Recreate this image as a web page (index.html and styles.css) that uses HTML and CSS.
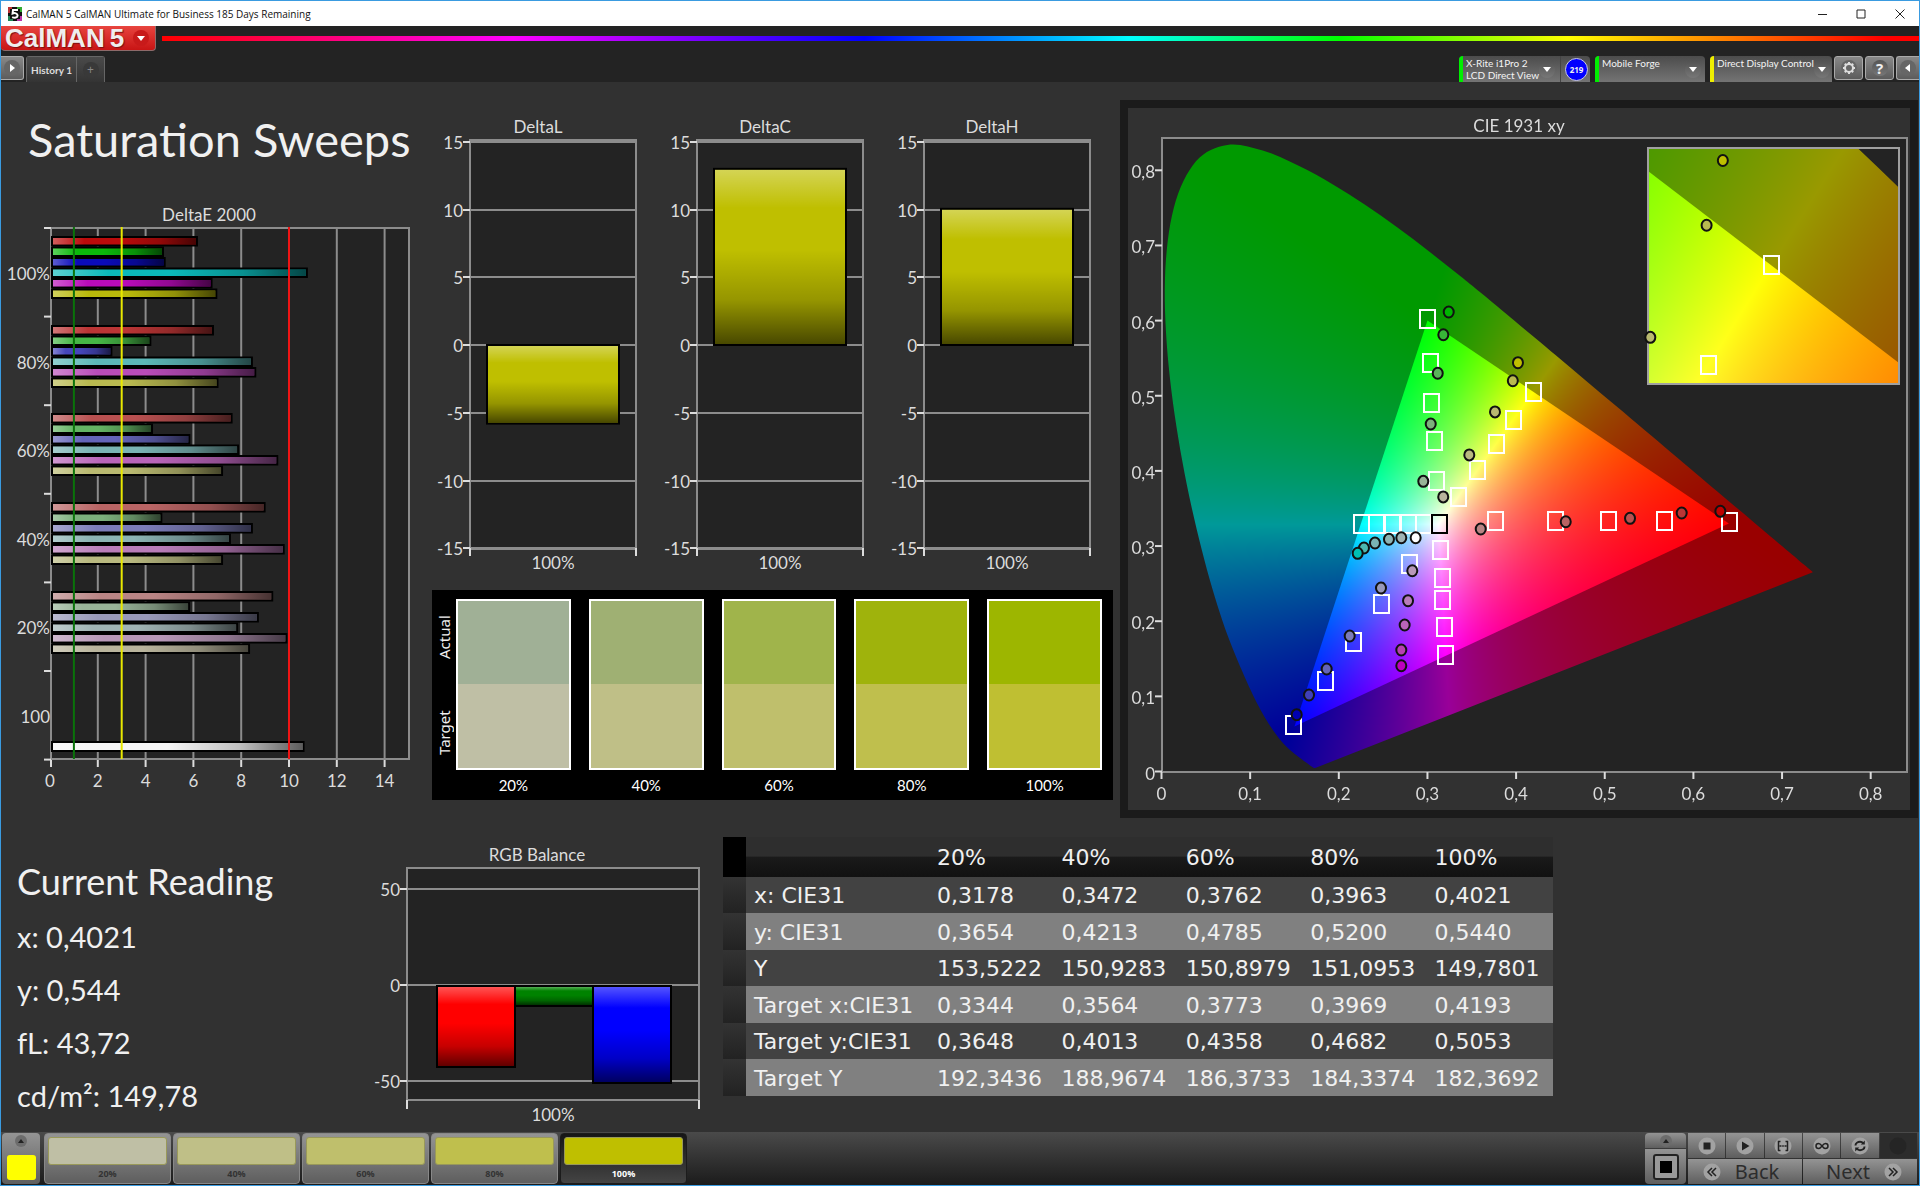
FILE: index.html
```html
<!DOCTYPE html>
<html lang="en">
<head>
<meta charset="utf-8">
<title>CalMAN 5 CalMAN Ultimate for Business 185 Days Remaining</title>
<link rel="stylesheet" href="styles.css">
</head>
<body>
<div class="window">
  <header class="titlebar">
    <svg class="app-icon" viewBox="0 0 14 14" aria-hidden="true">
      <rect width="14" height="14" fill="#111"/>
      <path d="M0 0h4v2H2v4H0z" fill="#b33"/><path d="M14 0v5h-2V2h-3V0z" fill="#3a3"/><path d="M0 14V9h2v3h3v2z" fill="#285"/><path d="M14 14H9v-2h3V9h2z" fill="#b3a"/>
      <path d="M10 3H5L4.600 6.500c2-.8 5-.3 5 2 0 2.300-3 2.700-5.400 1.600" fill="none" stroke="#fff" stroke-width="2"/>
    </svg>
    <span class="titlebar-text">CalMAN 5 CalMAN Ultimate for Business 185 Days Remaining</span>
    <div class="caption-buttons">
      <button type="button" aria-label="Minimize"><svg viewBox="0 0 10 10"><path d="M1 5.500h9"/></svg></button>
      <button type="button" aria-label="Maximize"><svg viewBox="0 0 10 10"><path d="M1 1h8v8H1z"/></svg></button>
      <button type="button" aria-label="Close"><svg viewBox="0 0 10 10"><path d="M.5.5l9 9M9.500.5l-9 9"/></svg></button>
    </div>
  </header>

  <div class="toolbar">
    <div class="brand-row">
      <button type="button" class="brand"><span class="brand-name">CalMAN</span><span class="brand-number">5</span><span class="round round-red"><i class="caret"></i></span></button>
      <div class="spectrum"></div>
    </div>
    <div class="tab-row">
      <button type="button" class="key key-play" aria-label="Show panel"><svg class="key-icon" viewBox="0 0 18 18"><circle cx="9" cy="9" r="8"/><path d="M7 5l5 4-5 4z"/></svg></button>
      <div class="tabs">
        <button type="button" class="tab">History 1</button>
        <button type="button" class="tab tab-add" aria-label="Add history"><span class="round">+</span></button>
      </div>
      <div class="devices">
        <div class="device device-meter">
          <button type="button" class="device-button green"><span class="device-text">X-Rite i1Pro 2<br>LCD Direct View</span><span class="round"><i class="caret"></i></span></button>
          <span class="reading-count">219</span>
        </div>
        <div class="device device-source"><button type="button" class="device-button green"><span class="device-text">Mobile Forge</span><span class="round"><i class="caret"></i></span></button></div>
        <div class="device device-display"><button type="button" class="device-button yellow"><span class="device-text">Direct Display Control</span><span class="round"><i class="caret"></i></span></button></div>
      </div>
      <div class="keys">
        <button type="button" class="key" aria-label="Settings"><svg class="key-icon" viewBox="0 0 18 18"><circle cx="9" cy="9" r="8"/><circle class="line" cx="9" cy="9" r="4"/><path class="teeth" d="M9 3v2M9 13v2M3 9h2M13 9h2M4.800 4.800l1.400 1.400M11.800 11.800l1.400 1.400M4.800 13.200l1.400-1.400M11.800 6.200l1.400-1.400"/></svg></button>
        <button type="button" class="key key-help" aria-label="Help"><span class="round">?</span></button>
        <button type="button" class="key key-last" aria-label="Hide panel"><svg class="key-icon" viewBox="0 0 18 18"><circle cx="9" cy="9" r="8"/><path d="M11 5l-5 4 5 4z"/></svg></button>
      </div>
    </div>
  </div>

  <main class="workspace">
    <div class="upper">
      <section class="sweeps">
        <h1>Saturation Sweeps</h1>
        <svg class="chart" id="delta-e" viewBox="0 0 431 604" role="img" aria-label="DeltaE 2000"></svg>
      </section>
      <section class="deltas">
        <div class="delta-charts">
          <svg class="chart" id="delta-l" viewBox="0 0 227 470" role="img" aria-label="DeltaL"></svg>
          <svg class="chart" id="delta-c" viewBox="0 0 227 470" role="img" aria-label="DeltaC"></svg>
          <svg class="chart" id="delta-h" viewBox="0 0 227 470" role="img" aria-label="DeltaH"></svg>
        </div>
        <div class="compare">
          <div class="compare-legend"><span>Actual</span><span>Target</span></div>
          <figure class="pair pair-20"><div></div><figcaption>20%</figcaption></figure>
          <figure class="pair pair-40"><div></div><figcaption>40%</figcaption></figure>
          <figure class="pair pair-60"><div></div><figcaption>60%</figcaption></figure>
          <figure class="pair pair-80"><div></div><figcaption>80%</figcaption></figure>
          <figure class="pair pair-100"><div></div><figcaption>100%</figcaption></figure>
        </div>
      </section>
      <section class="cie">
        <canvas id="cie-fill" width="782" height="702"></canvas>
        <svg class="chart" id="cie-marks" viewBox="0 0 782 702" role="img" aria-label="CIE 1931 xy"></svg>
      </section>
    </div>

    <div class="lower">
      <section class="reading">
        <h2>Current Reading</h2>
        <p>x: 0,4021</p>
        <p>y: 0,544</p>
        <p>fL: 43,72</p>
        <p>cd/m²: 149,78</p>
      </section>
      <section class="balance">
        <svg class="chart" id="rgb-balance" viewBox="0 0 358 288" role="img" aria-label="RGB Balance"></svg>
      </section>
      <table class="results">
        <thead>
          <tr><td class="marker"></td><th></th><th>20%</th><th>40%</th><th>60%</th><th>80%</th><th>100%</th></tr>
        </thead>
        <tbody>
          <tr><td class="marker"></td><th>x: CIE31</th><td>0,3178</td><td>0,3472</td><td>0,3762</td><td>0,3963</td><td>0,4021</td></tr>
          <tr><td class="marker"></td><th>y: CIE31</th><td>0,3654</td><td>0,4213</td><td>0,4785</td><td>0,5200</td><td>0,5440</td></tr>
          <tr><td class="marker"></td><th>Y</th><td>153,5222</td><td>150,9283</td><td>150,8979</td><td>151,0953</td><td>149,7801</td></tr>
          <tr><td class="marker"></td><th>Target x:CIE31</th><td>0,3344</td><td>0,3564</td><td>0,3773</td><td>0,3969</td><td>0,4193</td></tr>
          <tr><td class="marker"></td><th>Target y:CIE31</th><td>0,3648</td><td>0,4013</td><td>0,4358</td><td>0,4682</td><td>0,5053</td></tr>
          <tr><td class="marker"></td><th>Target Y</th><td>192,3436</td><td>188,9674</td><td>186,3733</td><td>184,3374</td><td>182,3692</td></tr>
        </tbody>
      </table>
    </div>
  </main>

  <footer class="transport">
    <button type="button" class="pattern-menu" aria-label="Pattern colour"><span class="dot"><i class="caret-up"></i></span><span class="pattern-colour"></span></button>
    <div class="steps">
      <button type="button" class="step step-20"><i></i>20%</button>
      <button type="button" class="step step-40"><i></i>40%</button>
      <button type="button" class="step step-60"><i></i>60%</button>
      <button type="button" class="step step-80"><i></i>80%</button>
      <button type="button" class="step step-100 current"><i></i>100%</button>
    </div>
    <div class="window-pattern">
      <button type="button" class="pattern-up" aria-label="Pattern size"><span class="dot"><i class="caret-up"></i></span></button>
      <button type="button" class="pattern-size" aria-label="Window pattern"><span></span></button>
    </div>
    <div class="controls">
      <div class="media">
        <button type="button" aria-label="Stop"><svg viewBox="0 0 18 18"><circle cx="9" cy="9" r="8.500"/><path d="M5.500 5.500h7v7h-7z"/></svg></button>
        <button type="button" aria-label="Play"><svg viewBox="0 0 18 18"><circle cx="9" cy="9" r="8.500"/><path d="M6 4.500l7.500 4.500L6 13.500z"/></svg></button>
        <button type="button" aria-label="Read series"><svg viewBox="0 0 18 18"><circle cx="9" cy="9" r="8.500"/><path class="line heavy" d="M6.500 4.500h-2v9h2M11.500 4.500h2v9h-2M5.500 9h2M8.200 9h1.600M10.500 9h2"/></svg></button>
        <button type="button" aria-label="Read continuously"><svg viewBox="0 0 18 18"><circle cx="9" cy="9" r="8.500"/><path class="line heavy" d="M9 9C7.500 7 6.500 6.500 5.500 6.500a2.500 2.500 0 0 0 0 5C6.500 11.500 7.500 11 9 9s2.500-2.500 3.500-2.500a2.500 2.500 0 0 1 0 5C11.500 11.500 10.500 11 9 9z"/></svg></button>
        <button type="button" aria-label="Refresh"><svg viewBox="0 0 18 18"><circle cx="9" cy="9" r="8.500"/><path class="line thick" d="M4.500 8.500C4.500 6 7 4.800 9 4.800c1.500 0 2.500.6 3.300 1.700M13.500 9.500c0 2.500-2.500 3.700-4.500 3.700-1.500 0-2.500-.6-3.300-1.700"/><path d="M13.800 3.500v4h-4zM4.200 14.500v-4h4z"/></svg></button>
        <span class="media-blank"><svg viewBox="0 0 18 18"><circle cx="9" cy="9" r="8.500"/></svg></span>
      </div>
      <div class="paging">
        <button type="button"><svg viewBox="0 0 18 18"><circle cx="9" cy="9" r="8.500"/><path class="line heavy" d="M9 5L5 9l4 4M13 5L9 9l4 4"/></svg>Back</button>
        <button type="button">Next<svg viewBox="0 0 18 18"><circle cx="9" cy="9" r="8.500"/><path class="line heavy" d="M5 5l4 4-4 4M9 5l4 4-4 4"/></svg></button>
      </div>
    </div>
  </footer>
</div>
<script src="charts.js"></script>
</body>
</html>
```
FILE: styles.css
```css
* { box-sizing: border-box; }

body {
  margin: 0;
  background: #313131;
  color: #f0f0f0;
  font-family: Lato, "Noto Sans", sans-serif;
  font-size: 11px;
}

button {
  margin: 0;
  padding: 0;
  border: 0;
  color: inherit;
  font: inherit;
  cursor: pointer;
}

.window {
  display: flex;
  flex-direction: column;
  min-height: 100vh;
  border: 1px solid #3a9be0;
}

/* Title bar */
.titlebar {
  display: flex;
  align-items: center;
  height: 25px;
  padding-left: 7px;
  background: #fff;
  color: #111;
}
.app-icon { width: 14px; height: 14px; margin-right: 4px; }
.titlebar-text { font-family: "Open Sans", "Noto Sans", sans-serif; font-size: 10px; }
.caption-buttons { display: flex; margin-left: auto; }
.caption-buttons button { width: 39px; height: 24px; background: none; }
.caption-buttons svg { display: block; width: 10px; height: 10px; margin: 0 auto; fill: none; stroke: #222; overflow: visible; }

/* Toolbar */
.toolbar { background: #232323; }
.brand-row { display: flex; align-items: center; gap: 6px; height: 28px; }
.brand {
  display: flex;
  align-items: center;
  align-self: flex-start;
  width: 155px;
  height: 25px;
  padding-left: 4px;
  border: 1px solid #8d6a6a;
  border-width: 0 1px 1px 0;
  border-radius: 0 0 4px 4px;
  background: linear-gradient(#e8453f, #c81414);
  color: #eee;
  font: bold 26px "Liberation Sans", sans-serif;
  line-height: 22px;
  text-shadow: 1px 1px 1px #7a1010;
}
.brand-number { margin-left: 5px; }
.round {
  display: inline-flex;
  align-items: center;
  justify-content: center;
  flex: none;
  width: 16px;
  height: 16px;
  border-radius: 50%;
  background: linear-gradient(#555, #777);
}
.round-red { margin-left: auto; margin-right: 6px; background: #c81a1a; }
.caret { border: 4px solid transparent; border-top: 5px solid #fff; border-bottom: 0; }
.caret-up { border: 3px solid transparent; border-bottom: 4px solid #222; border-top: 0; }
.spectrum {
  flex: 1;
  height: 5px;
  margin-bottom: 3px;
  background: linear-gradient(90deg, #f00, #f0f 20%, #00f 40%, #0ff 55%, #0f0 67%, #ff0 80%, #f00 98%);
}

.tab-row { display: flex; align-items: flex-end; height: 28px; }
.key {
  display: flex;
  align-items: center;
  justify-content: center;
  width: 29px;
  height: 24px;
  margin-bottom: 2px;
  border: 1px solid #aaa;
  border-radius: 3px;
  background: linear-gradient(#888, #5c5c5c);
}
.key-play { width: 23px; border-left: 0; border-radius: 0 3px 3px 0; }
.key-last { width: 23px; border-right: 0; border-radius: 3px 0 0 3px; }
.key-help { font: bold 15px "Noto Sans", sans-serif; }
.key-icon { width: 18px; height: 18px; fill: #fff; }
.key-icon circle { fill: #666; }
.key-icon .line { fill: none; stroke: #ddd; stroke-width: 2; }
.key-icon .teeth { stroke: #ddd; stroke-width: 2; }
.tabs { display: flex; margin-left: 2px; border: 1px solid #666; border-bottom: 0; border-radius: 3px 3px 0 0; }
.tab { width: 49px; height: 25px; background: linear-gradient(#4a4a4a, #343434); color: #ddd; font-size: 10px; font-weight: 700; white-space: nowrap; }
.tab-add { width: 28px; border-left: 1px solid #666; }
.tab-add .round { background: #393939; color: #888; font: 12px "Noto Sans", sans-serif; }

.devices { display: flex; gap: 5px; margin-left: auto; }
.device { display: flex; align-items: center; height: 26px; border-radius: 4px 4px 0 0; background: linear-gradient(#4c4c4c, #747474); overflow: hidden; }
.device-meter { width: 131px; }
.device-source { width: 110px; }
.device-display { width: 122px; }
.device-button {
  display: flex;
  flex: 1;
  align-items: center;
  justify-content: space-between;
  min-width: 0;
  height: 26px;
  padding: 0 4px 0 3px;
  border-left: 4px solid #0e0;
  background: none;
  color: #f4f4f4;
  font-size: 10px;
  line-height: 12px;
  text-align: left;
}
.device-button.yellow { border-left-color: #ee0; }
.device-text { align-self: flex-start; padding-top: 1px; white-space: nowrap; }
.device-meter .device-button { padding-right: 8px; border-right: 1px solid #444; }
.reading-count {
  flex: none;
  width: 23px;
  height: 23px;
  margin: 0 2px 0 4px;
  border: 1px solid #ccd;
  border-radius: 50%;
  background: #00f;
  font: bold 8px "Noto Sans", sans-serif;
  line-height: 21px;
  text-align: center;
}
.device .round { margin-top: 1px; }
.keys { display: flex; gap: 2px; margin-left: 2px; }

/* Workspace */
.workspace { flex: 1; }
.chart { display: block; width: 100%; height: auto; }
.upper { display: grid; grid-template-columns: minmax(0, 431fr) minmax(0, 681fr) minmax(0, 806fr); align-items: start; }
h1, h2, p, figure { margin: 0; font-weight: 400; }
h1 { margin: 25px 0 25px 27px; font-size: 47px; line-height: 64px; white-space: nowrap; }
.delta-charts { display: grid; grid-template-columns: repeat(3, 1fr); margin: 28px 0 10px; }

.compare { display: grid; grid-template-columns: 2px repeat(5, 1fr); column-gap: 18px; height: 210px; padding: 0 11px 0 4px; background: #000; }
.compare-legend { display: grid; grid-template-rows: 1fr 1fr; width: 16px; height: 190px; }
.compare-legend span { writing-mode: vertical-rl; transform: rotate(180deg); text-align: center; font: 15px "Noto Sans", sans-serif; line-height: 16px; }
.pair { padding-top: 9px; }
.pair div { height: 171px; border: 2px solid #fff; background: linear-gradient(var(--actual) 50%, var(--target) 50%); }
.pair figcaption { padding-top: 4px; font-size: 15px; line-height: 22px; text-align: center; color: #fff; }
.pair-20 { --actual: #a0b096; --target: #bfbfa5; }
.pair-40 { --actual: #9fb073; --target: #bfbf87; }
.pair-60 { --actual: #a0b44b; --target: #bfbf6c; }
.pair-80 { --actual: #9fb30c; --target: #bfbf4d; }
.pair-100 { --actual: #9db600; --target: #bfbf32; }

.cie { display: grid; margin: 18px 1px 0 7px; border: 8px solid #1b1b1b; }
.cie > * { grid-area: 1 / 1; }
#cie-fill { display: block; width: 100%; height: auto; }

.lower { display: grid; grid-template-columns: minmax(0, 364fr) minmax(0, 358fr) minmax(0, 830fr) minmax(0, 366fr); align-items: start; }
.reading { padding: 34px 0 0 16px; white-space: nowrap; }
.reading h2 { font-size: 36px; line-height: 58px; }
.reading p { font-size: 29px; line-height: 53px; }
.balance { padding-top: 23px; }

.results { width: 100%; margin-top: 19px; border-collapse: collapse; table-layout: fixed; font: 22px "DejaVu Sans", sans-serif; line-height: 26px; }
.results th, .results td { height: 36px; padding: 2px 0 0 6px; font-weight: 400; text-align: left; white-space: nowrap; }
.results th:nth-child(2) { width: 185px; padding-left: 8px; }
.results .marker { width: 23px; background: linear-gradient(#333, #222); }
.results thead th { height: 40px; background: linear-gradient(#2e2e2e 48%, #1a1a1a 50%, #111); }
.results thead .marker { background: #000; }
.results tbody tr { background: #424242; }
.results tbody tr:nth-child(even) { background: #808080; }
.results tbody tr:nth-child(even) td, .results tbody tr:nth-child(even) th { height: 37px; }

/* Charts */
.chart text { fill: #dcdcdc; font-size: 17px; }
.chart .plot { fill: #232323; stroke: #8c8c8c; stroke-width: 2; }
.chart .plot.open { fill: none; }
.chart .grid { stroke: #8c8c8c; stroke-width: 2; }
.chart .tick { stroke: #dcdcdc; stroke-width: 2; }
.chart .bar { stroke: #000; stroke-width: 2; }
.chart .limit { stroke-width: 2; }
.chart .target { fill: none; stroke: #fff; stroke-width: 2; }
.chart .white-point { stroke: #000; }
.chart .actual { stroke: #111; stroke-width: 2; }
.chart .inset { fill: none; stroke: #a0a0a0; stroke-width: 2; }

/* Transport bar */
.transport { display: flex; height: 53px; padding: 1px 2px 1px 1px; background: linear-gradient(#4a4a4a, #1b1b1b); }
.pattern-menu, .step, .pattern-up, .pattern-size, .media button, .paging button {
  background: linear-gradient(#949494, #5e5e5e);
}
.pattern-menu { display: flex; flex-direction: column; align-items: center; gap: 8px; width: 38px; padding-top: 2px; border-radius: 4px; }
.dot { display: flex; align-items: center; justify-content: center; width: 12px; height: 12px; border-radius: 50%; background: #6c6c6c; }
.pattern-colour { width: 29px; height: 25px; border-radius: 3px; background: #ff0; }
.steps { display: flex; gap: 2px; margin-left: 4px; }
.step {
  display: flex;
  flex-direction: column;
  align-items: center;
  width: 127px;
  padding: 3px 3px 0;
  border: 1px solid #888;
  border-radius: 4px;
  color: #333;
  font: bold 9px "Open Sans", sans-serif;
  line-height: 18px;
}
.step i { width: 100%; height: 32px; border: 1px solid #99995a; border-radius: 3px; background: var(--swatch); }
.step-20 { --swatch: #bfbfa5; }
.step-40 { --swatch: #bfbf87; }
.step-60 { --swatch: #bfbf6c; }
.step-80 { --swatch: #bfbf4d; }
.step-100 { --swatch: #bfbf00; }
.step.current { border-color: #1c1c1c; background: linear-gradient(#161616, #444); color: #fff; }
.window-pattern { display: flex; flex-direction: column; gap: 1px; width: 41px; margin-left: auto; }
.pattern-up { display: flex; align-items: center; justify-content: center; height: 15px; border-radius: 4px 4px 0 0; }
.pattern-size { display: flex; align-items: center; justify-content: center; flex: 1; border-radius: 0 0 4px 4px; }
.pattern-size span { width: 26px; height: 26px; border: 7px solid #999; outline: 2px solid #222; outline-offset: -2px; border-radius: 3px; background: #000; }
.controls { display: flex; flex-direction: column; gap: 1px; width: 229px; margin-left: 2px; }
.controls svg { display: block; width: 18px; height: 18px; fill: #222; }
.controls circle { fill: #a2a2a2; }
.controls .line { fill: none; stroke: #222; stroke-width: 1; }
.controls .heavy { stroke-width: 1.5; }
.controls .thick { stroke-width: 2; }
.media { display: grid; grid-template-columns: repeat(6, 1fr); gap: 1px; height: 25px; }
.media > * { display: flex; align-items: center; justify-content: center; }
.media-blank { background: #2c2c2c; }
.media-blank circle { fill: #252525; }
.paging { display: grid; grid-template-columns: 1fr 1fr; gap: 1px; flex: 1; }
.paging button { display: flex; align-items: center; justify-content: center; gap: 14px; color: #2c2c2c; font: 20px "Noto Sans", sans-serif; line-height: 24px; }
.paging button:first-child { padding-right: 8px; }
.paging button:last-child { padding-left: 8px; }
```
FILE: charts.js
```js
const SVG = 'http://www.w3.org/2000/svg';

function add(parent, name, attrs, text) {
  const el = document.createElementNS(SVG, name);
  for (const key in attrs) el.setAttribute(key, attrs[key]);
  if (text !== undefined) el.textContent = text;
  parent.appendChild(el);
  return el;
}

function line(svg, cls, x1, y1, x2, y2) {
  return add(svg, 'line', { class: cls, x1, y1, x2, y2 });
}

function label(svg, x, y, anchor, text) {
  return add(svg, 'text', { x, y, 'text-anchor': anchor }, text);
}

// Light-to-dark shading laid over every bar.
function shading(svg, id, vertical) {
  const g = add(svg, 'linearGradient', { id, x1: 0, y1: 0, x2: vertical ? 0 : 1, y2: vertical ? 1 : 0 });
  const stops = [[0, '#fff', 0.33], [0.22, '#fff', 0], [0.46, '#000', 0], [0.75, '#000', 0.22], [1, '#000', 0.62]];
  for (const [offset, color, opacity] of stops) {
    add(g, 'stop', { offset, 'stop-color': color, 'stop-opacity': opacity });
  }
}

function bar(svg, x, y, width, height, fill, shade) {
  add(svg, 'rect', { class: 'bar', x, y, width, height, fill });
  add(svg, 'rect', { x: x + 1, y: y + 1, width: width - 2, height: height - 2, fill: `url(#${shade})` });
}

/* DeltaE 2000, grouped horizontal bars */
(function () {
  const svg = document.getElementById('delta-e');
  const left = 50, right = 408, top = 32, bottom = 563, unit = 23.9, pitch = 88.6;
  const x = v => left - 1 + v * unit;
  const groups = [
    ['100%', 45, [6.19, 4.77, 4.84, 10.79, 6.8, 7.0], ['#bb0b0b', '#0bb90b', '#0b0bb9', '#0bb9b9', '#b90bb9', '#b9b90b']],
    ['80%', 134, [6.86, 4.24, 2.61, 8.49, 8.63, 7.05], ['#bb3535', '#46b646', '#4646bb', '#5cb8b8', '#b94cb9', '#b9b950']],
    ['60%', 222, [7.64, 4.31, 5.87, 7.91, 9.55, 7.24], ['#b95050', '#64b464', '#6464b9', '#7ab4b4', '#b964b9', '#b9b970']],
    ['40%', 311, [9.02, 4.7, 8.49, 7.57, 9.82, 7.24], ['#b96464', '#7cb07c', '#7c7cb9', '#8cb4b4', '#b97cb9', '#b9b980']],
    ['20%', 400, [9.34, 5.86, 8.74, 7.87, 9.93, 8.37], ['#b98484', '#98b498', '#9898b9', '#a0b4b4', '#b898b8', '#b9b49c']]
  ];
  shading(svg, 'shade-h', false);
  label(svg, 208, 25, 'middle', 'DeltaE 2000');
  add(svg, 'rect', { class: 'plot', x: left, y: top, width: right - left, height: bottom - top });
  for (let v = 0; v <= 14; v += 2) {
    if (v) line(svg, 'grid', x(v), top, x(v), bottom);
    line(svg, 'tick', v ? x(v) : left, bottom + 1, v ? x(v) : left, bottom + 8);
    label(svg, x(v), 591, 'middle', v);
  }
  for (let i = 0; i <= 6; i++) line(svg, 'tick', 43, top + i * pitch, left, top + i * pitch);
  groups.forEach(([name, first, values, colors], i) => {
    label(svg, 49, 84 + i * pitch, 'end', name);
    values.forEach((v, k) => bar(svg, left + 1, first - 4 + k * 10.5, x(v) - left - 2, 8.5, colors[k], 'shade-h'));
  });
  label(svg, 49, 527, 'end', '100');
  bar(svg, left + 1, 546, x(10.65) - left - 2, 9, '#f4f4f4', 'shade-h');
  for (const [v, color] of [[1, '#0a730a'], [3, '#e8e800'], [10, '#f01414']]) {
    line(svg, 'limit', x(v), top - 1, x(v), bottom).setAttribute('stroke', color);
  }
})();

/* DeltaL, DeltaC, DeltaH */
function deltaChart(id, title, value) {
  const svg = document.getElementById(id);
  const left = 38, right = 204, zero = 235, unit = 13.55;
  shading(svg, id + '-shade', true);
  label(svg, 106, 23, 'middle', title);
  add(svg, 'rect', { class: 'plot', x: left, y: 30, width: right - left, height: 409 });
  for (let v = -15; v <= 15; v += 5) {
    const y = Math.round(zero - v * unit);
    line(svg, 'grid', left, y, right, y);
    line(svg, 'tick', left - 7, y, left, y);
    label(svg, left - 7, y + 7, 'end', v);
  }
  line(svg, 'tick', left, 438, left, 446);
  line(svg, 'tick', right, 438, right, 446);
  const height = Math.abs(value) * unit;
  bar(svg, 55, value > 0 ? zero - height : zero, 132, height, '#bfbf00', id + '-shade');
  label(svg, 121, 459, 'middle', '100%');
}
deltaChart('delta-l', 'DeltaL', -5.8);
deltaChart('delta-c', 'DeltaC', 13);
deltaChart('delta-h', 'DeltaH', 10.05);

/* RGB Balance */
(function () {
  const svg = document.getElementById('rgb-balance');
  const left = 42, right = 334, top = 27, bottom = 259, zero = 144;
  shading(svg, 'rgb-shade', true);
  label(svg, 172, 20, 'middle', 'RGB Balance');
  add(svg, 'rect', { class: 'plot', x: left, y: top, width: right - left, height: bottom - top });
  for (const v of [50, 0, -50]) {
    const y = zero - v * 1.92;
    line(svg, 'grid', left, y, right, y);
    line(svg, 'tick', left - 7, y, left, y);
    label(svg, left - 7, y + 7, 'end', v);
  }
  line(svg, 'tick', left, bottom, left, bottom + 9);
  line(svg, 'tick', right, bottom, right, bottom + 9);
  [['#f00', 81], ['#008200', 20], ['#00f', 97]].forEach(([color, h], i) => {
    bar(svg, 72 + i * 78, zero + 1, 78, h, color, 'rgb-shade');
  });
  label(svg, 188, 280, 'middle', '100%');
})();

/* CIE 1931 xy */
const LOCUS = [
  [.1741, .005], [.1733, .0048], [.1714, .0051], [.1689, .0069], [.1644, .0109], [.1566, .0177], [.144, .0297],
  [.1355, .0399], [.1241, .0578], [.1096, .0868], [.0913, .1327], [.0687, .2007], [.0454, .295], [.0235, .4127],
  [.0082, .5384], [.0039, .6548], [.0139, .7502], [.0389, .812], [.0743, .8338], [.1142, .8262], [.1547, .8059],
  [.1929, .7816], [.2296, .7543], [.2658, .7243], [.3016, .6923], [.3373, .6589], [.3731, .6245], [.4441, .5547],
  [.5125, .4866], [.5752, .4242], [.627, .3725], [.6658, .334], [.6915, .3083], [.7079, .292], [.719, .2809],
  [.726, .274], [.7347, .2653]
];
const GAMUT = [[.64, .33], [.3, .6], [.15, .06]];
const SERIES = [
  { targets: [[.3765, .333], [.4439, .333], [.5034, .333], [.5673, .333], [.64, .332]],
    actual: [[.3601, .3227, '#b98484'], [.456, .3324, '#b96464'], [.5285, .3369, '#b95050'], [.5868, .344, '#bb3535'], [.6304, .3462, '#bf0000']] },
  { targets: [[.3097, .3861], [.3077, .4394], [.3043, .4903], [.3025, .544], [.299, .602]],
    actual: [[.2953, .3861, '#98b498'], [.3037, .4624, '#7cb07c'], [.3116, .5299, '#5ab45a'], [.3179, .5812, '#38b638'], [.324, .6115, '#00b400']] },
  { targets: [[.2795, .2765], [.248, .2225], [.216, .172], [.184, .1204], [.1487, .0623]],
    actual: [[.2476, .2442, '#9898b9'], [.2123, .1803, '#7c7cb9'], [.1863, .1364, '#6464b9'], [.1664, .1018, '#4040b9'], [.1525, .0756, '#0000b0']] },
  { targets: [[.2946, .33], [.2777, .33], [.26, .33], [.2423, .33], [.2247, .33]],
    actual: [[.2705, .3111, '#a0b4b4'], [.2566, .309, '#8cb4b4'], [.2408, .3041, '#7ab4b4'], [.2284, .2974, '#4cb8b0'], [.2213, .2903, '#00bfb4']] },
  { targets: [[.3145, .2952], [.3168, .2575], [.3168, .2278], [.3183, .1923], [.3201, .1554]],
    actual: [[.2829, .2672, '#b898b8'], [.2781, .2273, '#b97cb9'], [.2743, .195, '#b964b9'], [.2705, .1617, '#b940b0'], [.2705, .1408, '#bf00bf']] },
  { targets: [[.3344, .3648], [.3564, .4013], [.3773, .4358], [.3969, .4682], [.4193, .5053]],
    actual: [[.3178, .3654, '#b9b49c'], [.3472, .4213, '#b9b980'], [.3762, .4785, '#b9b970'], [.3963, .52, '#b9b950'], [.4021, .544, '#bfbf00']] }
];
const mainView = { x: 34, y: 30, w: 745, h: 633, px: v => 33.5 + v * 886.5, py: v => 663.5 - v * 751.5, ux: p => (p - 33.5) / 886.5, uy: p => (663.5 - p) / 751.5 };
const insetView = { x: 520, y: 40, w: 251, h: 236, px: v => 643 + (v - .4193) * 2800, py: v => 157 - (v - .5053) * 2700, ux: p => .4193 + (p - 643) / 2800, uy: p => .5053 - (p - 157) / 2700 };

// Linear RGB of a chromaticity, scaled so that its largest channel is 1.
function rgbOf(x, y) {
  if (y < 1e-4) y = 1e-4;
  const X = x / y, Z = (1 - x - y) / y;
  const r = Math.max(0, 3.2406 * X - 1.5372 - .4986 * Z);
  const g = Math.max(0, -.9689 * X + 1.8758 + .0415 * Z);
  const b = Math.max(0, .0557 * X - .204 + 1.057 * Z);
  const m = Math.max(r, g, b) || 1;
  return [r / m, g / m, b / m];
}

function layer(view, gain) {
  const c = document.createElement('canvas');
  c.width = view.w;
  c.height = view.h;
  const ctx = c.getContext('2d');
  const img = ctx.createImageData(view.w, view.h);
  for (let j = 0, o = 0; j < view.h; j++) {
    for (let i = 0; i < view.w; i++, o += 4) {
      const rgb = rgbOf(view.ux(view.x + i + .5), view.uy(view.y + j + .5));
      for (let k = 0; k < 3; k++) img.data[o + k] = rgb[k] * 255 * gain;
      img.data[o + 3] = 255;
    }
  }
  ctx.putImageData(img, 0, 0);
  return c;
}

function paint(ctx, view) {
  ctx.save();
  ctx.beginPath();
  ctx.rect(view.x, view.y, view.w, view.h);
  ctx.clip();
  ctx.fillStyle = '#232323';
  ctx.fillRect(view.x, view.y, view.w, view.h);

  const pts = LOCUS.map(([x, y]) => [view.px(x), view.py(y)]);
  ctx.beginPath();
  ctx.moveTo(...pts[0]);
  for (let i = 0; i < pts.length - 1; i++) {
    const a = pts[Math.max(0, i - 1)], b = pts[i], c = pts[i + 1], d = pts[Math.min(pts.length - 1, i + 2)];
    ctx.bezierCurveTo(b[0] + (c[0] - a[0]) / 6, b[1] + (c[1] - a[1]) / 6, c[0] - (d[0] - b[0]) / 6, c[1] - (d[1] - b[1]) / 6, c[0], c[1]);
  }
  ctx.closePath();
  ctx.clip();
  ctx.drawImage(layer(view, .6), view.x, view.y);

  ctx.beginPath();
  GAMUT.forEach(([x, y]) => ctx.lineTo(view.px(x), view.py(y)));
  ctx.closePath();
  ctx.clip();
  ctx.drawImage(layer(view, 1), view.x, view.y);
  ctx.restore();
}

function target(svg, view, [x, y], cls = 'target') {
  add(svg, 'rect', { class: cls, x: Math.round(view.px(x)) - 7, y: Math.round(view.py(y)) - 9, width: 15, height: 18 });
}

function actual(svg, view, [x, y, fill]) {
  add(svg, 'ellipse', { class: 'actual', cx: view.px(x), cy: view.py(y), rx: 5, ry: 5.5, fill });
}

(function () {
  const ctx = document.getElementById('cie-fill').getContext('2d');
  paint(ctx, mainView);
  paint(ctx, insetView);

  const svg = document.getElementById('cie-marks');
  label(svg, 391, 24, 'middle', 'CIE 1931 xy');
  add(svg, 'rect', { class: 'plot open', x: 34, y: 30, width: 745, height: 634 });
  for (let i = 0; i <= 8; i++) {
    const name = i ? '0,' + i : '0';
    const x = mainView.px(i / 10), y = mainView.py(i / 10);
    line(svg, 'tick', x, 664, x, 671);
    line(svg, 'tick', 27, y, 34, y);
    label(svg, x, 692, 'middle', name);
    label(svg, 27, y + 8, 'end', name);
  }
  SERIES.forEach(s => s.targets.forEach(p => target(svg, mainView, p)));
  SERIES.forEach(s => s.actual.forEach(p => actual(svg, mainView, p)));
  actual(svg, mainView, [.2867, .3111, '#fff']);
  target(svg, mainView, [.3127, .329], 'target white-point');

  add(svg, 'rect', { class: 'inset', x: 520, y: 40, width: 251, height: 236 });
  const yellow = SERIES[5];
  yellow.targets.slice(3).forEach(p => target(svg, insetView, p));
  yellow.actual.slice(2).forEach(p => actual(svg, insetView, p));
})();
```
